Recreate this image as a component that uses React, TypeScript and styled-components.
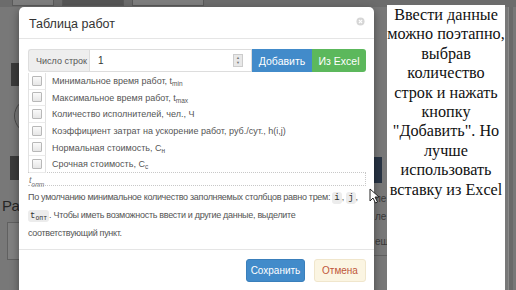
import styled, { createGlobalStyle } from 'styled-components';

const GlobalStyle = createGlobalStyle`
  html, body {
    margin: 0;
    padding: 0;
  }
  body {
    font-family: "Liberation Sans", Arial, sans-serif;
    background: #777;
  }
`;

const Screen = styled.div`
  position: relative;
  width: 516px;
  height: 290px;
  overflow: hidden;
  background: #7a7a7a;
`;

/* the page behind the dimmed overlay */
const Backdrop = styled.div`
  display: grid;
  grid-template-columns: 19px 355px 13px 118px 11px;
  grid-template-rows: 7px 283px;
  height: 290px;
`;

const TopStrip = styled.div`
  grid-column: 1 / -1;
  display: flex;
  gap: 8px;
  padding-left: 12px;
  background: #6c6c6c;
`;

const GhostButton = styled.div<{ $w: number; $dark?: boolean }>`
  width: ${(p) => p.$w}px;
  height: 5px;
  border: 1px solid #5a5a5a;
  border-top: none;
  background: ${(p) => (p.$dark ? '#555' : '#7e7e7e')};
`;

const Rail = styled.div`
  display: flex;
  flex-direction: column;
  overflow: hidden;
  background: #787878;
`;

const DarkBlock = styled.div<{ $top: number; $h: number; $left: number }>`
  margin-top: ${(p) => p.$top}px;
  margin-left: ${(p) => p.$left}px;
  height: ${(p) => p.$h}px;
  background: #3b3b3b;
`;

const Ring = styled.div`
  margin-top: 12px;
  margin-left: 14px;
  width: 34px;
  height: 34px;
  flex-shrink: 0;
  border-radius: 50%;
  border: 1px solid #4a4a4a;
`;

const BigText = styled.div`
  margin-top: 18px;
  margin-left: 2px;
  font-size: 15px;
  line-height: 16px;
  color: #262626;
  white-space: nowrap;
`;

const OutlineBox = styled.div`
  margin-top: 8px;
  margin-left: 7px;
  height: 36px;
  width: 30px;
  border: 1px solid #606060;
  background: #808080;
`;

const RailText = styled.div<{ $top: number }>`
  margin-top: ${(p) => p.$top}px;
  margin-left: 1px;
  font-size: 10px;
  line-height: 11px;
  color: #3a3a3a;
  white-space: nowrap;
`;

const NavyBlock = styled.div`
  margin-top: 150px;
  width: 8px;
  height: 26px;
  background: #283444;
`;

const RailLine = styled.div`
  margin-top: 8px;
  height: 1px;
  background: #606060;
`;

const ScrollTrack = styled.div`
  margin-left: 3px;
  width: 4px;
  height: 283px;
  background: #6a6a6a;
  border-left: 1px solid #8a8a8a;
`;

/* overlay layer: modal dialog and the note over the page */
const OverlayLayer = styled.div`
  position: absolute;
  inset: 0;
  display: flex;
  align-items: flex-start;
  padding-left: 19px;
  gap: 13px;
`;

const Modal = styled.div`
  margin-top: 7px;
  width: 355px;
  height: 290px;
  background: #fff;
  border-radius: 5px 5px 0 0;
  box-shadow: 0 3px 9px rgba(0, 0, 0, 0.4);
  display: flex;
  flex-direction: column;
`;

const ModalHeader = styled.div`
  display: flex;
  align-items: center;
  justify-content: space-between;
  height: 31px;
  padding: 0 10px;
  border-bottom: 1px solid #e5e5e5;
`;

const Title = styled.div`
  font-size: 12.5px;
  color: #333;
  padding-top: 2px;
`;

const CloseIcon = styled.svg`
  width: 9px;
  height: 9px;
  margin-right: -1px;
  margin-top: -2px;
`;

const ModalBody = styled.div`
  padding: 10px 8px 7px 9px;
`;

const InputGroup = styled.div`
  display: flex;
  height: 23px;
`;

const Addon = styled.div`
  display: flex;
  align-items: center;
  width: 61px;
  box-sizing: border-box;
  padding-left: 7px;
  font-size: 9px;
  white-space: nowrap;
  color: #555;
  background: #eee;
  border: 1px solid #ddd;
  border-right: none;
  border-radius: 3px 0 0 3px;
`;

const NumberField = styled.div`
  flex: 1;
  display: flex;
  align-items: center;
  justify-content: space-between;
  padding: 0 8px 0 8px;
  border: 1px solid #ddd;
  font-size: 10px;
  color: #333;
`;

const Spinner = styled.div`
  width: 8px;
  height: 11px;
  background: #e8e8e8;
  border: 1px solid #ccc;
  display: flex;
  flex-direction: column;
  align-items: center;
  justify-content: space-around;
  font-size: 4px;
  line-height: 4px;
  color: #777;
`;

const ActionButton = styled.div<{ $color: string; $w: number }>`
  width: ${(p) => p.$w}px;
  display: flex;
  align-items: center;
  justify-content: center;
  background: ${(p) => p.$color};
  color: #fff;
  font-size: 10.5px;
  &:last-child {
    border-radius: 0 3px 3px 0;
  }
`;

const OptionList = styled.div`
  margin-top: 1px;
  border-left: 1px solid #e2e2e2;
`;

const OptionRow = styled.div`
  display: flex;
  align-items: center;
  height: 16.6px;
`;

const CheckCell = styled.div`
  width: 17px;
  height: 100%;
  box-sizing: border-box;
  display: flex;
  align-items: center;
  justify-content: center;
  border-right: 1px solid #e2e2e2;
  border-bottom: 1px solid #eaeaea;
`;

const CheckBox = styled.div`
  width: 8px;
  height: 8px;
  border: 1px solid #b8b8b8;
  background: linear-gradient(#fafafa, #e6e6e6);
  border-radius: 1px;
`;

const OptionLabel = styled.div`
  padding-left: 6px;
  font-size: 9px;
  color: #555;
  white-space: nowrap;
`;

const Sub = styled.sub`
  font-size: 6.5px;
  vertical-align: -2px;
  line-height: 0;
  letter-spacing: 0;
`;

const DottedBox = styled.div`
  margin-top: -1px;
  height: 14px;
  box-sizing: border-box;
  border: 1px dotted #c8c8c8;
  border-left: none;
  display: flex;
  align-items: flex-end;
  padding-left: 1px;
  font-size: 9px;
  font-style: italic;
  color: #777;
`;

const Note = styled.p`
  margin: 3px 0 0;
  font-size: 9px;
  letter-spacing: -0.3px;
  line-height: 17px;
  color: #555;
`;

const Code = styled.code`
  font-family: "Liberation Mono", "DejaVu Sans Mono", monospace;
  font-size: 9px;
  letter-spacing: 0;
  color: #333;
  background: #ececec;
  border-radius: 3px;
  padding: 1px 2px;
`;

const ModalFooter = styled.div`
  display: flex;
  justify-content: flex-end;
  gap: 9px;
  padding: 9px 8px 0 0;
  border-top: 1px solid #e5e5e5;
`;

const FooterButton = styled.div<{ $variant: 'primary' | 'cancel' }>`
  box-sizing: border-box;
  width: ${(p) => (p.$variant === 'primary' ? 59 : 52)}px;
  height: 23px;
  display: flex;
  align-items: center;
  justify-content: center;
  font-size: 10px;
  border-radius: 3px;
  background: ${(p) => (p.$variant === 'primary' ? '#428bca' : '#fbf5e2')};
  color: ${(p) => (p.$variant === 'primary' ? '#fff' : '#c0573a')};
  border: 1px solid ${(p) => (p.$variant === 'primary' ? '#3a7fbb' : '#f0e6cc')};
`;

const Callout = styled.div`
  margin-top: 5px;
  width: 118px;
  height: 285px;
  background: #fff;
  padding-top: 1px;
  box-sizing: border-box;
  font-family: "Liberation Serif", "Times New Roman", serif;
  font-size: 16.2px;
  line-height: 19.4px;
  color: #111;
  text-align: center;
`;

const CalloutLine = styled.div`
  white-space: nowrap;
  margin: 0 -3px;
`;

const Cursor = styled.svg`
  position: absolute;
  left: 369px;
  top: 188px;
  width: 11px;
  height: 16px;
`;

const options = [
  { label: 'Минимальное время работ, t', sub: 'min' },
  { label: 'Максимальное время работ, t', sub: 'max' },
  { label: 'Количество исполнителей, чел., Ч' },
  { label: 'Коэффициент затрат на ускорение работ, руб./сут., h(i,j)' },
  { label: 'Нормальная стоимость, C', sub: 'н' },
  { label: 'Срочная стоимость, C', sub: 'c' },
];

const calloutLines = [
  'Ввести данные',
  'можно поэтапно,',
  'выбрав',
  'количество',
  'строк и нажать',
  'кнопку',
  '"Добавить". Но',
  'лучше',
  'использовать',
  'вставку из Excel',
];

export default function App() {
  return (
    <Screen>
      <GlobalStyle />
      <Backdrop>
        <TopStrip>
          <GhostButton $w={40} />
          <GhostButton $w={60} $dark />
          <GhostButton $w={70} />
        </TopStrip>
        <Rail>
          <DarkBlock $top={56} $h={23} $left={11} />
          <Ring />
          <DarkBlock $top={22} $h={24} $left={10} />
          <BigText>Ра</BigText>
          <OutlineBox />
        </Rail>
        <div />
        <Rail>
          <NavyBlock />
          <RailText $top={10}>ле</RailText>
          <RailText $top={7}>ле</RailText>
          <RailText $top={14}>еш</RailText>
          <RailLine />
        </Rail>
        <div />
        <Rail>
          <ScrollTrack />
        </Rail>
      </Backdrop>

      <OverlayLayer>
        <Modal>
          <ModalHeader>
            <Title>Таблица работ</Title>
            <CloseIcon viewBox="0 0 10 10">
              <circle cx="5" cy="5" r="4.5" fill="#d6d6d6" />
              <path d="M3.2 3.2 L6.8 6.8 M6.8 3.2 L3.2 6.8" stroke="#fff" strokeWidth="1.2" />
            </CloseIcon>
          </ModalHeader>
          <ModalBody>
            <InputGroup>
              <Addon>Число строк</Addon>
              <NumberField>
                1
                <Spinner>
                  <span>▲</span>
                  <span>▼</span>
                </Spinner>
              </NumberField>
              <ActionButton $color="#428bca" $w={60}>
                Добавить
              </ActionButton>
              <ActionButton $color="#5cb85c" $w={54}>
                Из Excel
              </ActionButton>
            </InputGroup>
            <OptionList>
              {options.map((o) => (
                <OptionRow key={o.label}>
                  <CheckCell>
                    <CheckBox />
                  </CheckCell>
                  <OptionLabel>
                    {o.label}
                    {o.sub && <Sub>{o.sub}</Sub>}
                  </OptionLabel>
                </OptionRow>
              ))}
            </OptionList>
            <DottedBox>
              t<Sub>опт</Sub>
            </DottedBox>
            <Note>
              По умолчанию минимальное количество заполняемых столбцов равно трем:{' '}
              <Code>i</Code>, <Code>j</Code>,{' '}
              <Code>
                t<Sub>опт</Sub>
              </Code>
              . Чтобы иметь возможность ввести и другие данные, выделите
              соответствующий пункт.
            </Note>
          </ModalBody>
          <ModalFooter>
            <FooterButton $variant="primary">Сохранить</FooterButton>
            <FooterButton $variant="cancel">Отмена</FooterButton>
          </ModalFooter>
        </Modal>
        <Callout>
          {calloutLines.map((line) => (
            <CalloutLine key={line}>{line}</CalloutLine>
          ))}
        </Callout>
      </OverlayLayer>

      <Cursor viewBox="0 0 11 16">
        <path d="M1 1 L1 13 L4 10 L6.5 15 L8.5 14 L6 9 L10 9 Z" fill="#fff" stroke="#222" strokeWidth="1" />
      </Cursor>
    </Screen>
  );
}
